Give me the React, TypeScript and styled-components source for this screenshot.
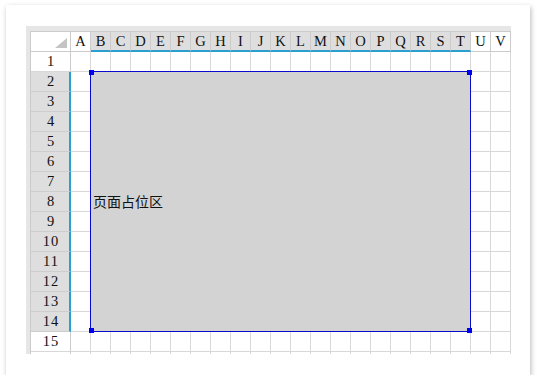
import React from "react";
import styled, { createGlobalStyle } from "styled-components";

const GlobalStyle = createGlobalStyle`
  html, body { margin: 0; padding: 0; background: #ffffff; }
  * { box-sizing: border-box; }
`;

const Card = styled.div`
  margin: 5px 0 0 6px;
  width: 524px;
  height: 370px;
  background: #ffffff;
  box-shadow: 1px 2px 5px rgba(0, 0, 0, 0.28);
  padding: 21px 0 0 20px;
`;

const Frame = styled.div`
  position: relative;
  width: 485px;
  height: 328px;
  background: #e6e6e6;
  padding: 5px 0 0 4px;
  overflow: hidden;
`;

const Grid = styled.div`
  display: grid;
  grid-template-columns: 40px repeat(22, 20px);
  grid-auto-rows: 20px;
  width: 481px;
  border-top: 1px solid #cbcbcb;
  border-left: 1px solid #cbcbcb;
  font-family: "Liberation Serif", "DejaVu Serif", serif;
  font-size: 14.5px;
  color: #111;
`;

const Corner = styled.div`
  position: relative;
  background: #fff;
  border-right: 1px solid #cbcbcb;
  border-bottom: 1px solid #cbcbcb;
`;

const Triangle = styled.div`
  position: absolute;
  right: 3px;
  bottom: 3px;
  width: 0;
  height: 0;
  border-left: 12px solid transparent;
  border-bottom: 10px solid #c4c4c4;
`;

const ColHead = styled.div<{ $sel: boolean }>`
  display: flex;
  align-items: center;
  justify-content: center;
  background: ${(p) => (p.$sel ? "#dedede" : "#ffffff")};
  border-right: 1px solid #cbcbcb;
  border-bottom: ${(p) => (p.$sel ? "2px solid #2aa0d2" : "1px solid #cbcbcb")};
  padding-top: ${(p) => (p.$sel ? "1px" : "0")};
`;

const RowHead = styled.div<{ $sel: boolean }>`
  display: flex;
  align-items: center;
  justify-content: center;
  letter-spacing: 1px;
  background: ${(p) => (p.$sel ? "#dedede" : "#ffffff")};
  border-right: ${(p) => (p.$sel ? "2px solid #2aa0d2" : "1px solid #cbcbcb")};
  border-bottom: 1px solid ${(p) => (p.$sel ? "#cdcdcd" : "#d8d8d8")};
  padding-left: ${(p) => (p.$sel ? "2px" : "1px")};
`;

const Cell = styled.div`
  background: #fff;
  border-right: 1px solid #d8d8d8;
  border-bottom: 1px solid #d8d8d8;
`;

const Selection = styled.div`
  position: absolute;
  left: 64px;
  top: 45px;
  width: 381px;
  height: 261px;
  border: 1px solid #0a0acc;
  background: #d3d3d3;
  display: flex;
  align-items: center;
  padding-left: 2px;
  padding-bottom: 1px;
  font-family: "Noto Sans CJK SC", "Noto Sans", sans-serif;
  font-size: 14px;
  color: #111;
`;

const Handle = styled.div<{ $pos: "tl" | "tr" | "bl" | "br" }>`
  position: absolute;
  width: 5px;
  height: 5px;
  background: #0000f0;
  ${(p) => (p.$pos[0] === "t" ? "top: -2px;" : "bottom: -2px;")}
  ${(p) => (p.$pos[1] === "l" ? "left: -2px;" : "right: -2px;")}
`;

const COLS = "ABCDEFGHIJKLMNOPQRSTUV".split("");
const ROWS = Array.from({ length: 16 }, (_, i) => i + 1);

export default function App() {
  return (
    <>
      <GlobalStyle />
      <Card>
        <Frame>
          <Grid>
            <Corner>
              <Triangle />
            </Corner>
            {COLS.map((c, i) => (
              <ColHead key={c} $sel={i >= 1 && i <= 19}>
                {c}
              </ColHead>
            ))}
            {ROWS.map((r) => (
              <React.Fragment key={r}>
                <RowHead $sel={r >= 2 && r <= 14}>{r <= 15 ? r : ""}</RowHead>
                {COLS.map((c) => (
                  <Cell key={c} />
                ))}
              </React.Fragment>
            ))}
          </Grid>
          <Selection>
            页面占位区
            <Handle $pos="tl" />
            <Handle $pos="tr" />
            <Handle $pos="bl" />
            <Handle $pos="br" />
          </Selection>
        </Frame>
      </Card>
    </>
  );
}
